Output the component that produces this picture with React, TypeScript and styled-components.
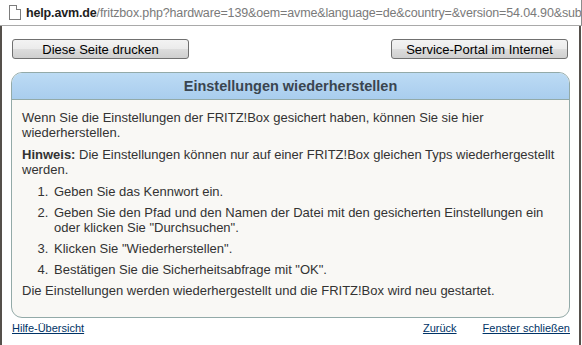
import React from 'react';
import styled, { createGlobalStyle } from 'styled-components';

const GlobalStyle = createGlobalStyle`
  html, body {
    margin: 0;
    padding: 0;
    background: #ffffff;
  }
  body {
    width: 582px;
    height: 345px;
    overflow: hidden;
    font-family: "Liberation Sans", Arial, sans-serif;
  }
`;

const Window = styled.div`
  width: 582px;
  height: 345px;
  display: flex;
  flex-direction: column;
  background: #ffffff;
`;

const AddressBar = styled.div`
  height: 25px;
  border-bottom: 1px solid #a9a9a9;
  border-right: 1px solid #8c8c8c;
  display: grid;
  grid-template-columns: 12px 1fr;
  column-gap: 5px;
  align-items: center;
  padding-left: 9px;
  flex-shrink: 0;
`;

/* page glyph with a folded corner, drawn with borders */
const DocIcon = styled.div`
  position: relative;
  box-sizing: border-box;
  width: 12px;
  height: 15px;
  border: 1px solid #7c7c7c;
  background: #ffffff;

  &::before {
    content: '';
    position: absolute;
    top: -1px;
    right: -1px;
    width: 4px;
    height: 4px;
    background: #ffffff;
    border-left: 1px solid #7c7c7c;
    border-bottom: 1px solid #7c7c7c;
  }
`;

const Url = styled.div`
  min-width: 0;
  overflow: hidden;
  white-space: nowrap;
  font-family: "Liberation Sans", Arial, sans-serif;
  font-size: 12.5px;
  letter-spacing: -0.15px;
`;

const Host = styled.span`
  color: #1e1e1e;
  font-weight: bold;
`;

const Path = styled.span`
  color: #7a7a7a;
`;

const Frame = styled.div`
  flex: 1;
  display: flex;
  flex-direction: column;
  border-left: 2px solid #55504b;
  border-right: 2px solid #55504b;
  margin-right: 1px;
  padding: 13px 9px 0 9px;
`;

const ButtonRow = styled.div`
  display: flex;
  justify-content: space-between;
  padding: 0 2px 0 1px;
`;

const PageButton = styled.button`
  width: 177px;
  height: 20px;
  padding: 0;
  border: 1px solid #707070;
  border-radius: 3px;
  background: linear-gradient(#f3f3f3 0%, #ebebeb 50%, #dddddd 51%, #cfcfcf 100%);
  font-family: "Liberation Sans", Arial, sans-serif;
  font-size: 13px;
  color: #000;
  cursor: pointer;
`;

const Panel = styled.section`
  margin-top: 13px;
  border: 1px solid #93aaa8;
  border-radius: 11px;
  background: #f9f8f5;
  overflow: hidden;
`;

const PanelHeader = styled.h1`
  margin: 0;
  height: 26px;
  line-height: 26px;
  text-align: center;
  font-size: 14.5px;
  font-weight: bold;
  color: #3a4550;
  background: linear-gradient(#bcdbf4, #a9cdee);
  border-bottom: 1px solid #93aaa8;
`;

const PanelBody = styled.div`
  padding: 10px 10px 19px 10px;
  font-size: 13px;
  line-height: 15px;
  color: #333333;
`;

const Para = styled.p`
  margin: 0 0 7px 0;
  &:last-child {
    margin-bottom: 0;
  }
`;

const Steps = styled.ol`
  margin: 0 0 6px 0;
  padding-left: 30px;
`;

const Step = styled.li`
  margin-bottom: 6px;
  padding-left: 2px;
`;

const Footer = styled.div`
  display: flex;
  align-items: center;
  padding: 4px 0 0 1px;
  font-size: 11px;
`;

const FooterLink = styled.a<{ $push?: boolean }>`
  color: #003366;
  text-decoration: underline;
  margin-left: ${(p) => (p.$push ? 'auto' : '0')};
  margin-right: ${(p) => (p.$push ? '26px' : '0')};
`;

const App: React.FC = () => {
  const steps = [
    'Geben Sie das Kennwort ein.',
    'Geben Sie den Pfad und den Namen der Datei mit den gesicherten Einstellungen ein oder klicken Sie "Durchsuchen".',
    'Klicken Sie "Wiederherstellen".',
    'Bestätigen Sie die Sicherheitsabfrage mit "OK".'
  ];

  return (
    <Window>
      <GlobalStyle />
      <AddressBar>
        <DocIcon />
        <Url>
          <Host>help.avm.de</Host>
          <Path>/fritzbox.php?hardware=139&amp;oem=avme&amp;language=de&amp;country=&amp;version=54.04.90&amp;sub</Path>
        </Url>
      </AddressBar>
      <Frame>
        <ButtonRow>
          <PageButton>Diese Seite drucken</PageButton>
          <PageButton>Service-Portal im Internet</PageButton>
        </ButtonRow>
        <Panel>
          <PanelHeader>Einstellungen wiederherstellen</PanelHeader>
          <PanelBody>
            <Para>
              Wenn Sie die Einstellungen der FRITZ!Box gesichert haben, können Sie sie hier
              wiederherstellen.
            </Para>
            <Para>
              <b>Hinweis:</b> Die Einstellungen können nur auf einer FRITZ!Box gleichen Typs
              wiederhergestellt werden.
            </Para>
            <Steps>
              {steps.map((s, i) => (
                <Step key={i}>{s}</Step>
              ))}
            </Steps>
            <Para>Die Einstellungen werden wiederhergestellt und die FRITZ!Box wird neu gestartet.</Para>
          </PanelBody>
        </Panel>
        <Footer>
          <FooterLink href="#">Hilfe-Übersicht</FooterLink>
          <FooterLink href="#" $push>Zurück</FooterLink>
          <FooterLink href="#">Fenster schließen</FooterLink>
        </Footer>
      </Frame>
    </Window>
  );
};

export default App;
